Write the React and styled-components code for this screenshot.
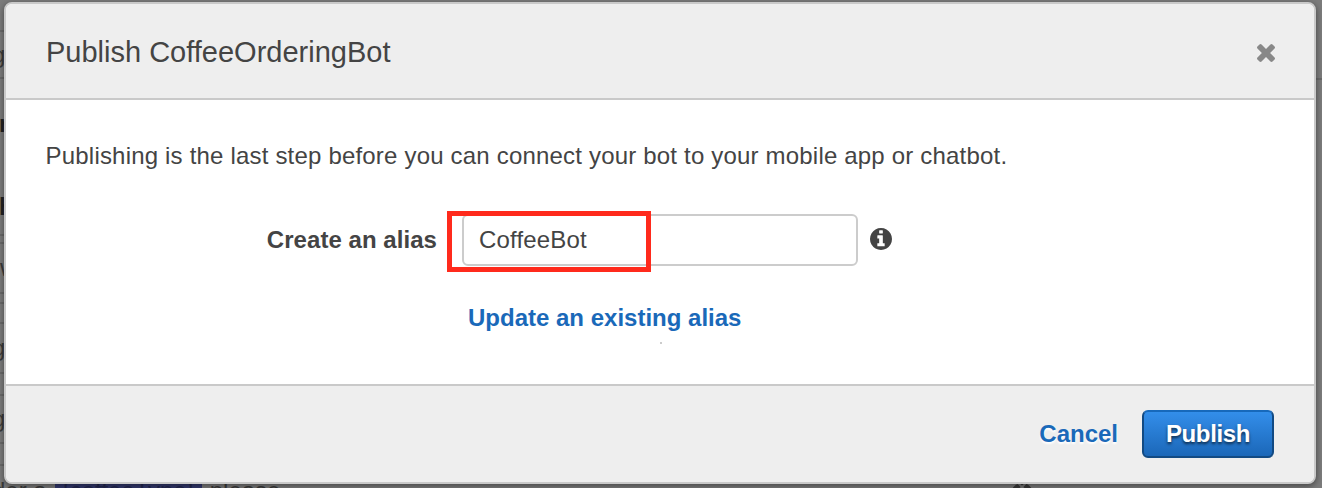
import React from "react";
import styled, { createGlobalStyle } from "styled-components";

const GlobalStyle = createGlobalStyle`
  *, *::before, *::after { box-sizing: border-box; }
  html, body { margin: 0; height: 100%; overflow: hidden; }
  body {
    font-family: "Liberation Sans", Helvetica, Arial, sans-serif;
    font-size: 24px;
    color: #444;
    background: #7b7b7b;
  }
`;

const Screen = styled.div`
  position: relative;
  width: 1322px;
  height: 488px;
  overflow: hidden;
  padding: 2px 6px 4px 4px;
`;

const Page = styled.div`
  position: absolute;
  inset: 0;
  display: grid;
  grid-template: 466px 22px / 1316px 6px;
  overflow: hidden;
  background: #7b7b7b;
`;

const Rail = styled.div`
  display: flex;
  flex-direction: column;
`;

const RailRow = styled.div`
  display: flex;
  flex-direction: column;
  justify-content: ${(p) => (p.$end ? "flex-end" : "center")};
  gap: ${(p) => p.$gap || 0}px;
  flex: none;
  height: ${(p) => p.$h}px;
  padding-bottom: ${(p) => (p.$end ? 13 : 0)}px;
  border-bottom: 2px solid #696969;
`;

const PageText = styled.span`
  margin-left: ${(p) => p.$shift || 0}px;
  line-height: 28px;
  font-weight: ${(p) => (p.$bold ? 700 : 400)};
  color: ${(p) => (p.$bold ? "#222" : "#3a3a3a")};
  white-space: pre;
`;

const PageLine = styled.div`
  grid-column: 1 / -1;
  display: flex;
  align-items: flex-start;
  gap: 8px;
  padding-top: 11px;
`;

const Slot = styled.span`
  width: 147px;
  height: 28px;
  text-align: center;
  line-height: 28px;
  background: #33396f;
  color: #22264f;
`;

const PageGlyph = styled.svg`
  width: 22px;
  height: 22px;
  margin: 6px 0 0 723px;
`;

const Dialog = styled.section`
  position: relative;
  display: flex;
  flex-direction: column;
  width: 1312px;
  height: 482px;
  border: 2px solid #c9c9c9;
  border-radius: 8px;
  background: #fff;
  box-shadow: 0 2px 6px rgba(0, 0, 0, 0.45);
`;

const Header = styled.header`
  display: flex;
  align-items: center;
  justify-content: space-between;
  height: 96px;
  padding: 2px 39px 0 40px;
  border-bottom: 2px solid #c9c9c9;
  border-radius: 6px 6px 0 0;
  background: #eee;
`;

const Title = styled.h1`
  margin: 0;
  font-size: 29px;
  line-height: 34px;
  font-weight: 400;
`;

const CloseButton = styled.button`
  display: flex;
  padding: 2px 0 0;
  border: 0;
  background: none;
  color: #888;
  svg { width: 18px; height: 18px; }
`;

const Body = styled.div`
  flex: 1;
  padding: 42px 40px 0 39px;
`;

const Intro = styled.p`
  margin: 0;
  padding-left: 0.6px;
  line-height: 28px;
  letter-spacing: 0.19px;
  white-space: nowrap;
`;

const FieldRow = styled.div`
  display: flex;
  align-items: center;
  margin-top: 44px;
  height: 52px;
`;

const Label = styled.label`
  width: 392px;
  text-align: right;
  font-weight: 700;
  letter-spacing: 0.05px;
  white-space: nowrap;
`;

const Field = styled.div`
  position: relative;
  margin-left: 25px;
`;

const AliasInput = styled.input`
  display: block;
  width: 396px;
  height: 52px;
  padding: 0 15px;
  border: 2px solid #ccc;
  border-radius: 6px;
  background: #fff;
  font: inherit;
  letter-spacing: 0.18px;
  color: #444;
  outline: 0;
`;

const Highlight = styled.div`
  position: absolute;
  inset: -3px 207px -6px -15px;
  border: 5px solid #ff2a1c;
  pointer-events: none;
`;

const InfoIcon = styled.svg`
  width: 22px;
  height: 22px;
  margin: -2px 0 0 12px;
  fill: #444;
`;

const TextLink = styled.a`
  display: block;
  width: max-content;
  color: #1a69b9;
  font-weight: 700;
  line-height: 28px;
`;

const UpdateLink = styled(TextLink)`
  margin: 38px 0 0 423px;
`;

const Speck = styled.div`
  width: 2px;
  height: 2px;
  margin: 10px 0 0 615px;
  background: #ccc;
`;

const Footer = styled.footer`
  display: flex;
  align-items: center;
  justify-content: flex-end;
  gap: 24px;
  height: 98px;
  padding: 0 40px 0 0;
  border-top: 2px solid #c9c9c9;
  border-radius: 0 0 6px 6px;
  background: #eee;
`;

const CancelLink = styled(TextLink)`
  text-shadow: 0 2px 2px #fff;
`;

const PublishButton = styled.button`
  width: 132px;
  height: 48px;
  padding: 0;
  border: 2px solid #124a83;
  border-top-color: #1769bb;
  border-radius: 6px;
  background: linear-gradient(#338eea, #1b67b8);
  color: #fff;
  font: inherit;
  font-weight: 700;
  letter-spacing: -0.35px;
  text-shadow: 0 2px 3px rgba(0, 0, 0, 0.65);
`;

export default function App() {
  return (
    <>
      <GlobalStyle />
      <Screen>
        <Page aria-hidden="true">
          <Rail>
            <RailRow $h={32} />
            <RailRow $h={47}><PageText $shift={-8}>g</PageText></RailRow>
            <RailRow $h={157} $gap={55} $end>
              <PageText $shift={-1} $bold>r</PageText>
              <PageText $shift={-1} $bold>h</PageText>
            </RailRow>
            <RailRow $h={8} />
            <RailRow $h={50}><PageText>w</PageText></RailRow>
            <RailRow $h={10} />
            <RailRow $h={20} />
            <RailRow $h={50}><PageText $shift={-8}>g</PageText></RailRow>
            <RailRow $h={22} />
            <RailRow $h={48}><PageText $shift={-8}>g</PageText></RailRow>
            <RailRow $h={22} />
          </Rail>
          <Rail>
            <RailRow $h={80} />
          </Rail>
          <PageLine>
            <PageText $shift={-8}>der a</PageText>
            <Slot>{"{coffeeType}"}</Slot>
            <PageText>please</PageText>
            <PageGlyph viewBox="0 0 22 22">
              <circle cx="11" cy="11" r="11" fill="#383838" />
              <path d="M7 0l8 8M15 0L7 8" stroke="#777" strokeWidth="2" />
            </PageGlyph>
          </PageLine>
        </Page>
        <Dialog role="dialog" aria-label="Publish CoffeeOrderingBot">
          <Header>
            <Title>Publish CoffeeOrderingBot</Title>
            <CloseButton aria-label="Close">
              <svg viewBox="302 366 1188 1188" fill="currentColor">
                <path d="M1490 1322q0 40-28 68l-136 136q-28 28-68 28t-68-28l-294-294-294 294q-28 28-68 28t-68-28l-136-136q-28-28-28-68t28-68l294-294-294-294q-28-28-28-68t28-68l136-136q28-28 68-28t68 28l294 294 294-294q28-28 68-28t68 28l136 136q28 28 28 68t-28 68l-294 294 294 294q28 28 28 68z" />
              </svg>
            </CloseButton>
          </Header>
          <Body>
            <Intro>Publishing is the last step before you can connect your bot to your mobile app or chatbot.</Intro>
            <FieldRow>
              <Label htmlFor="alias">Create an alias</Label>
              <Field>
                <AliasInput id="alias" defaultValue="CoffeeBot" />
                <Highlight />
              </Field>
              <InfoIcon viewBox="128 128 1536 1536">
                <path d="M1152 1376v-160q0-14-9-23t-23-9h-96v-512q0-14-9-23t-23-9h-320q-14 0-23 9t-9 23v160q0 14 9 23t23 9h96v320h-96q-14 0-23 9t-9 23v160q0 14 9 23t23 9h448q14 0 23-9t9-23zm-128-896v-160q0-14-9-23t-23-9h-192q-14 0-23 9t-9 23v160q0 14 9 23t23 9h192q14 0 23-9t9-23zm640 416q0 209-103 385.5t-279.5 279.5-385.5 103-385.5-103-279.5-279.5-103-385.5 103-385.5 279.5-279.5 385.5-103 385.5 103 279.5 279.5 103 385.5z" />
              </InfoIcon>
            </FieldRow>
            <UpdateLink>Update an existing alias</UpdateLink>
            <Speck />
          </Body>
          <Footer>
            <CancelLink>Cancel</CancelLink>
            <PublishButton>Publish</PublishButton>
          </Footer>
        </Dialog>
      </Screen>
    </>
  );
}
